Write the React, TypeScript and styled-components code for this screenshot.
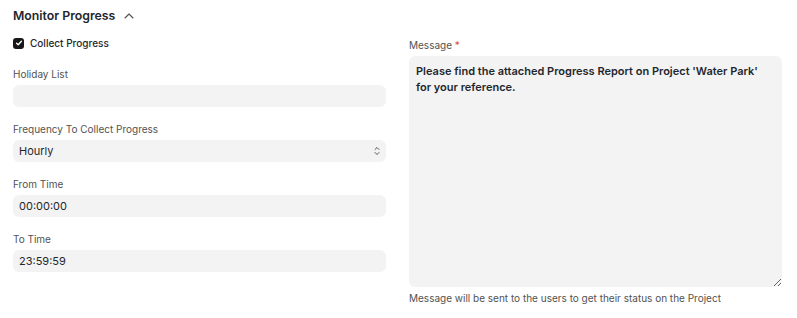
import React from 'react';
import styled, {createGlobalStyle} from 'styled-components';

const GlobalStyle = createGlobalStyle`
  html, body {
    margin: 0;
    padding: 0;
    background: #ffffff;
  }
  body {
    font-family: Inter, "Noto Sans", sans-serif;
    color: #1f272e;
  }
`;

const Section = styled.section`
  width: 797px;
  height: 318px;
  box-sizing: border-box;
  padding: 6px 15px 0 13px;
`;

const Header = styled.div`
  display: flex;
  align-items: center;
  gap: 9px;
  height: 20px;

  h3 {
    margin: 0;
    font-size: 12.3px;
    font-weight: 600;
    line-height: 20px;
    color: #1f272e;
  }
`;

const Columns = styled.div`
  display: grid;
  grid-template-columns: 373px 373px;
  column-gap: 23px;
  margin-top: 9px;
`;

const Column = styled.div<{$offset?: number}>`
  display: flex;
  flex-direction: column;
  gap: 14px;
  padding-top: ${p => p.$offset ?? 0}px;
`;

const CheckRow = styled.label`
  display: flex;
  align-items: center;
  gap: 6px;
  height: 16px;
  margin-bottom: 1px;
  font-size: 10px;
  font-weight: 500;
  color: #1f272e;
`;

const CheckBox = styled.span`
  width: 11px;
  height: 11px;
  border-radius: 3px;
  background: #171717;
  display: flex;
  align-items: center;
  justify-content: center;
`;

const Field = styled.div`
  display: flex;
  flex-direction: column;
  gap: 3px;
`;

const Label = styled.div`
  font-size: 10px;
  line-height: 16px;
  color: #525252;

  span {
    color: #e24c4c;
  }
`;

const Control = styled.div`
  height: 22px;
  box-sizing: border-box;
  border-radius: 6px;
  background: #f3f3f3;
  padding: 0 6px;
  display: flex;
  align-items: center;
  justify-content: space-between;
  font-size: 11px;
  color: #1f272e;
`;

const MessageBox = styled.textarea`
  height: 231px;
  box-sizing: border-box;
  border: none;
  outline: none;
  border-radius: 6px;
  background: #f3f3f3;
  padding: 7px 7px;
  font-family: Inter, "Noto Sans", sans-serif;
  font-size: 11px;
  font-weight: 600;
  line-height: 16px;
  color: #1f272e;
  resize: vertical;
`;

const Help = styled.div`
  font-size: 10px;
  line-height: 16px;
  color: #525252;
  margin-top: -11px;
`;

const Chevron = () => (
    <svg width="10" height="6" viewBox="0 0 10 6" fill="none">
        <path d="M1 5L5 1L9 5" stroke="#525252" strokeWidth="1.1" strokeLinecap="round" strokeLinejoin="round"/>
    </svg>
);

const SelectArrows = () => (
    <svg width="6" height="10" viewBox="0 0 6 10" fill="none">
        <path d="M1 3.5L3 1.5L5 3.5M1 6.5L3 8.5L5 6.5" stroke="#525252" strokeWidth="1" strokeLinecap="round" strokeLinejoin="round"/>
    </svg>
);

const fields = [
    {label: 'Holiday List', value: '', select: false},
    {label: 'Frequency To Collect Progress', value: 'Hourly', select: true},
    {label: 'From Time', value: '00:00:00', select: false},
    {label: 'To Time', value: '23:59:59', select: false},
];

export default function App() {
    return (
        <>
            <GlobalStyle/>
            <Section>
                <Header>
                    <h3>Monitor Progress</h3>
                    <Chevron/>
                </Header>
                <Columns>
                    <Column>
                        <CheckRow>
                            <CheckBox>
                                <svg width="8" height="8" viewBox="0 0 8 8" fill="none">
                                    <path d="M1.6 4.2L3.2 5.7L6.4 2.3" stroke="#fff" strokeWidth="1.4" strokeLinecap="round" strokeLinejoin="round"/>
                                </svg>
                            </CheckBox>
                            Collect Progress
                        </CheckRow>
                        {fields.map(({label, value, select}) => (
                            <Field key={label}>
                                <Label>{label}</Label>
                                <Control>
                                    <span>{value}</span>
                                    {select && <SelectArrows/>}
                                </Control>
                            </Field>
                        ))}
                    </Column>
                    <Column $offset={2}>
                        <Field>
                            <Label>Message <span>*</span></Label>
                            <MessageBox
                                defaultValue="Please find the attached Progress Report on Project 'Water Park' for your reference."
                            />
                        </Field>
                        <Help>Message will be sent to the users to get their status on the Project</Help>
                    </Column>
                </Columns>
            </Section>
        </>
    );
}
